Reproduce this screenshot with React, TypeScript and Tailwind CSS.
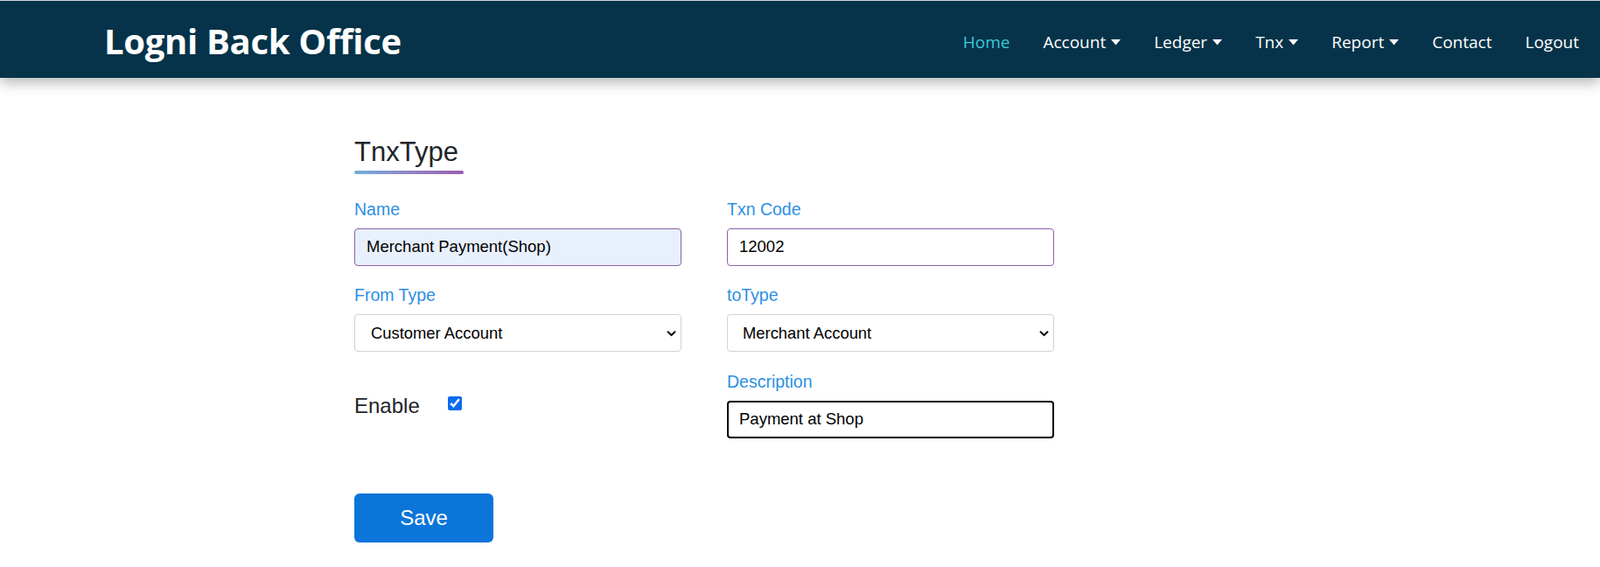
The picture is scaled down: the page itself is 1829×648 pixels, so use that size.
import React from "react";

const Caret = () => (
  <svg width="11" height="7" viewBox="0 0 11 7" className="ml-[6px] mt-[1px]" aria-hidden>
    <path d="M0 0 H11 L5.5 6.5 Z" fill="currentColor" />
  </svg>
);

const Chevron = () => (
  <svg
    width="11"
    height="7"
    viewBox="0 0 11 7"
    className="pointer-events-none absolute right-[6px] top-1/2 -translate-y-1/2"
    aria-hidden
  >
    <path d="M1 1.2 L5.5 5.5 L10 1.2" fill="none" stroke="#111" strokeWidth="2" />
  </svg>
);

const navItems: { label: string; caret?: boolean; active?: boolean }[] = [
  { label: "Home", active: true },
  { label: "Account", caret: true },
  { label: "Ledger", caret: true },
  { label: "Tnx", caret: true },
  { label: "Report", caret: true },
  { label: "Contact" },
  { label: "Logout" },
];

const labelCls =
  "block text-[19.5px] leading-[28px] text-[#2d8fe3] mb-[8px]";

export default function App() {
  return (
    <div
      className="min-h-[648px] bg-white"
      style={{ fontFamily: "'Liberation Sans', Arial, sans-serif" }}
    >
      <header className="relative z-10 h-[89px] border-t border-[#cfd6da] bg-[#063349] shadow-[0_6px_14px_rgba(0,0,0,0.28)] flex items-center justify-between pl-[119px] pr-[24px] pt-[3px]">
        <div
          className="text-white font-bold text-[40px] leading-none tracking-[-0.3px]"
          style={{ fontFamily: "'Open Sans', 'Noto Sans', sans-serif" }}
        >
          Logni Back Office
        </div>
        <nav
          className="flex items-center gap-[38px] text-[19px] mt-[3px]"
          style={{ fontFamily: "'Open Sans', 'Noto Sans', sans-serif" }}
        >
          {navItems.map((n) => (
            <a
              key={n.label}
              className={`flex items-center ${n.active ? "text-[#3cc8d8]" : "text-white"}`}
            >
              {n.label}
              {n.caret && <Caret />}
            </a>
          ))}
        </nav>
      </header>

      <main className="ml-[405px] w-[800px] pt-[67.4px] text-[#212529]">
        <h2 className="text-[31px] leading-[36px] font-normal">TnxType</h2>
        <div className="mt-[2.4px] h-[4px] w-[125px] rounded-full bg-gradient-to-r from-[#72addb] to-[#9b5bb0]" />

        <form className="mt-[25.8px]" onSubmit={(e) => e.preventDefault()}>
          <div className="grid grid-cols-2 gap-x-[52px] gap-y-[19.5px]">
            <div>
              <label className={labelCls}>Name</label>
              <input
                readOnly
                value="Merchant Payment(Shop)"
                className="block w-full h-[43px] rounded-[4px] border border-[#8c60a8] bg-[#e8f0fe] pl-[13px] text-[18.5px] text-black outline-none"
              />
            </div>
            <div>
              <label className={labelCls}>Txn Code</label>
              <input
                readOnly
                value="12002"
                className="block w-full h-[43px] rounded-[4px] border border-[#8c60a8] bg-white pl-[13px] text-[18.5px] text-black outline-none"
              />
            </div>
            <div>
              <label className={labelCls}>From Type</label>
              <div className="relative">
                <select
                  defaultValue="Customer Account"
                  className="block w-full h-[43px] appearance-none rounded-[4px] border border-[#cfd3d7] bg-white pl-[18px] text-[18.4px] text-black outline-none"
                >
                  <option>Customer Account</option>
                  <option>Merchant Account</option>
                </select>
                <Chevron />
              </div>
            </div>
            <div>
              <label className={labelCls}>toType</label>
              <div className="relative">
                <select
                  defaultValue="Merchant Account"
                  className="block w-full h-[43px] appearance-none rounded-[4px] border border-[#cfd3d7] bg-white pl-[17px] text-[18.4px] text-black outline-none"
                >
                  <option>Customer Account</option>
                  <option>Merchant Account</option>
                </select>
                <Chevron />
              </div>
            </div>
            <div className="flex items-start pt-[24px]">
              <span className="text-[24px] leading-[36px]">Enable</span>
              <input
                type="checkbox"
                defaultChecked
                className="ml-[32px] mt-[7px] h-[16px] w-[16px] accent-[#0b6cf0]"
              />
            </div>
            <div>
              <label className={labelCls}>Description</label>
              <input
                readOnly
                value="Payment at Shop"
                className="block w-full h-[43px] rounded-[4px] border-2 border-black bg-white pl-[12px] text-[18.5px] text-black outline-none"
              />
            </div>
          </div>

          <button
            type="submit"
            className="mt-[63px] block h-[56px] w-[159px] rounded-[6px] bg-[#0b75d9] text-[24px] text-white"
          >
            Save
          </button>
        </form>
      </main>
    </div>
  );
}
